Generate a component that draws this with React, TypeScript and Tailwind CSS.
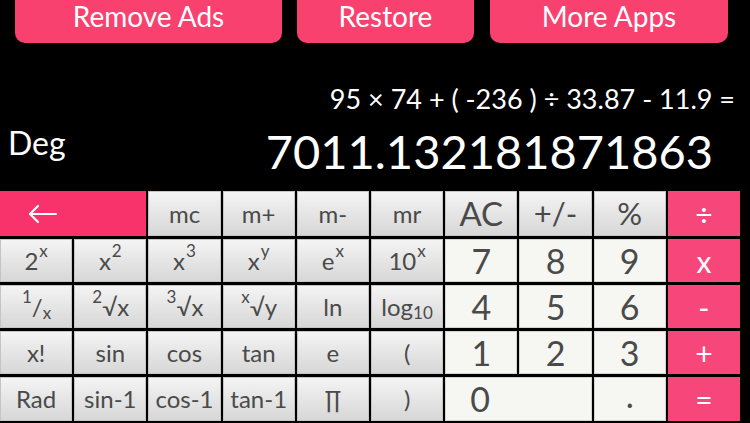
import React from 'react';

type Kind = 'fn' | 'num' | 'op' | 'back';

const kindClass: Record<Kind, string> = {
  fn: 'bg-linear-to-b from-[#f4f4f4] to-[#d7d7d7] border border-[#c4c4c4] text-[#4a4a4a] text-[24px]',
  num: 'bg-[#f6f7f2] border border-[#d4d4d0] text-[#4a4a4a] text-[34px]',
  op: 'bg-[#f6467a] text-white text-[30px]',
  back: 'bg-[#f8336b] text-white',
};

function Key({ kind, children, className = '' }: { kind: Kind; children: React.ReactNode; className?: string }) {
  return <div className={`flex items-center justify-center leading-none ${kindClass[kind]} ${className}`}>{children}</div>;
}

function Sup({ children }: { children: React.ReactNode }) {
  return <span className="text-[17px] relative -top-[10px] ml-[1px]">{children}</span>;
}

function Sub({ children }: { children: React.ReactNode }) {
  return <span className="text-[17px] relative top-[6px]">{children}</span>;
}

function BackArrow() {
  return (
    <svg width="30" height="20" viewBox="0 0 30 20" fill="none" stroke="white" strokeWidth="2.2" strokeLinecap="round" strokeLinejoin="round">
      <path d="M28 10H2" />
      <path d="M10 2L2 10l8 8" />
    </svg>
  );
}

export default function App() {
  return (
    <div className="w-[750px] h-[423px] bg-black overflow-hidden font-['Lato','Noto_Sans',sans-serif]">
      <div className="flex h-[43px]">
        <button className="ml-[15px] w-[267px] h-full rounded-b-[10px] bg-[#f9416f] text-white text-[28px] leading-none pb-[11px]">Remove Ads</button>
        <button className="ml-[15px] w-[177px] h-full rounded-b-[10px] bg-[#f9416f] text-white text-[28px] leading-none pb-[11px]">Restore</button>
        <button className="ml-[16px] w-[238px] h-full rounded-b-[10px] bg-[#f9416f] text-white text-[28px] leading-none pb-[11px]">More Apps</button>
      </div>

      <div className="h-[148px] flex flex-col text-white">
        <div className="mt-[40px] pr-[15px] text-right text-[27px] leading-[32px]">95 × 74 + ( -236 ) ÷ 33.87 - 11.9 =</div>
        <div className="mt-[8px] flex justify-between items-start">
          <span className="ml-[8px] mt-[2px] text-[32px] leading-[36px]">Deg</span>
          <span className="mr-[37px] text-[47px] leading-[56px]">7011.132181871863</span>
        </div>
      </div>

      <div className="w-[740px] grid grid-cols-10 grid-rows-[45px_43px_43px_43px_44px] gap-x-[2px] gap-y-[3px]">
        <Key kind="back" className="col-span-2 !justify-start pl-[28px]"><BackArrow /></Key>
        <Key kind="fn">mc</Key>
        <Key kind="fn">m+</Key>
        <Key kind="fn">m-</Key>
        <Key kind="fn">mr</Key>
        <Key kind="fn" className="!text-[33px]">AC</Key>
        <Key kind="fn" className="!text-[31px]">+/-</Key>
        <Key kind="fn" className="!text-[31px]">%</Key>
        <Key kind="op">÷</Key>

        <Key kind="fn">2<Sup>x</Sup></Key>
        <Key kind="fn">x<Sup>2</Sup></Key>
        <Key kind="fn">x<Sup>3</Sup></Key>
        <Key kind="fn">x<Sup>y</Sup></Key>
        <Key kind="fn">e<Sup>x</Sup></Key>
        <Key kind="fn">10<Sup>x</Sup></Key>
        <Key kind="num">7</Key>
        <Key kind="num">8</Key>
        <Key kind="num">9</Key>
        <Key kind="op">x</Key>

        <Key kind="fn"><Sup>1</Sup>/<Sub>x</Sub></Key>
        <Key kind="fn"><Sup>2</Sup>√x</Key>
        <Key kind="fn"><Sup>3</Sup>√x</Key>
        <Key kind="fn"><Sup>x</Sup>√y</Key>
        <Key kind="fn">ln</Key>
        <Key kind="fn">log<Sub>10</Sub></Key>
        <Key kind="num">4</Key>
        <Key kind="num">5</Key>
        <Key kind="num">6</Key>
        <Key kind="op">-</Key>

        <Key kind="fn">x!</Key>
        <Key kind="fn">sin</Key>
        <Key kind="fn">cos</Key>
        <Key kind="fn">tan</Key>
        <Key kind="fn">e</Key>
        <Key kind="fn">(</Key>
        <Key kind="num">1</Key>
        <Key kind="num">2</Key>
        <Key kind="num">3</Key>
        <Key kind="op">+</Key>

        <Key kind="fn">Rad</Key>
        <Key kind="fn">sin-1</Key>
        <Key kind="fn">cos-1</Key>
        <Key kind="fn">tan-1</Key>
        <Key kind="fn">∏</Key>
        <Key kind="fn">)</Key>
        <Key kind="num" className="col-span-2 !justify-start pl-[24px]">0</Key>
        <Key kind="num" className="!items-end pb-[8px]">.</Key>
        <Key kind="op">=</Key>
      </div>
    </div>
  );
}
